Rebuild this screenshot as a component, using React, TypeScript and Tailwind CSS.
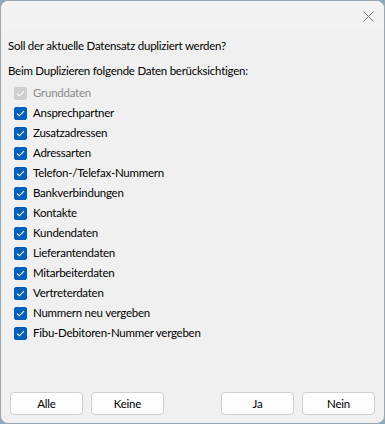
import { useState } from 'react'

const items = [
  'Ansprechpartner',
  'Zusatzadressen',
  'Adressarten',
  'Telefon-/Telefax-Nummern',
  'Bankverbindungen',
  'Kontakte',
  'Kundendaten',
  'Lieferantendaten',
  'Mitarbeiterdaten',
  'Vertreterdaten',
  'Nummern neu vergeben',
  'Fibu-Debitoren-Nummer vergeben',
]

function Check({ checked, disabled }: { checked: boolean; disabled?: boolean }) {
  const bg = disabled ? 'bg-[#cfcfcf] border-[#cfcfcf]' : checked ? 'bg-[#005fb8] border-[#005fb8]' : 'bg-white border-[#8a8a8a]'
  return (
    <span className={`flex h-[13px] w-[13px] shrink-0 items-center justify-center rounded-[2px] border ${bg}`}>
      {checked && (
        <svg width="9" height="7" viewBox="0 0 9 7" fill="none">
          <path d="M1 3.6 L3.4 5.8 L8 1.2" stroke="white" strokeWidth="1.1" />
        </svg>
      )}
    </span>
  )
}

function Btn({ label }: { label: string }) {
  return (
    <button className="h-[23px] w-[73px] rounded-[4px] border border-[#d0d0d0] bg-[#fdfdfd] text-black">
      {label}
    </button>
  )
}

export default function App() {
  const [checked, setChecked] = useState<boolean[]>(items.map(() => true))

  return (
    <div className="h-[424px] w-[385px] bg-[#8fa8b6]" style={{ fontFamily: 'Lato, "Segoe UI", sans-serif' }}>
      <div className="flex h-full flex-col rounded-[8px] border border-[#9aa6ad] bg-[#f0f0f0] text-[11.5px] tracking-[-0.25px]">
        <div className="flex h-[30px] items-center justify-end rounded-t-[8px] bg-[#f3f3f3] pr-[10px]">
          <svg width="11" height="11" viewBox="0 0 11 11">
            <path d="M0.5 0.5 L10.5 10.5 M10.5 0.5 L0.5 10.5" stroke="#7a7a7a" strokeWidth="1" />
          </svg>
        </div>
        <div className="flex flex-1 flex-col px-[7px] leading-[16px] text-black">
          <p className="mt-[7px]">Soll der aktuelle Datensatz dupliziert werden?</p>
          <p className="mt-[9px]">Beim Duplizieren folgende Daten berücksichtigen:</p>
          <div className="mt-[4px] flex flex-col">
            <label className="flex h-[20px] items-center gap-[6px] pl-[6px] text-[#8a8a8a]">
              <Check checked disabled />
              Grunddaten
            </label>
            {items.map((it, i) => (
              <label
                key={it}
                className="flex h-[20px] items-center gap-[6px] pl-[6px]"
                onClick={() => setChecked(checked.map((c, j) => (j === i ? !c : c)))}
              >
                <Check checked={checked[i]!} />
                {it}
              </label>
            ))}
          </div>
          <div className="mt-auto mb-[8px] flex items-center px-[2px]">
            <div className="flex gap-[8px]">
              <Btn label="Alle" />
              <Btn label="Keine" />
            </div>
            <div className="ml-auto flex gap-[8px]">
              <Btn label="Ja" />
              <Btn label="Nein" />
            </div>
          </div>
        </div>
      </div>
    </div>
  )
}
